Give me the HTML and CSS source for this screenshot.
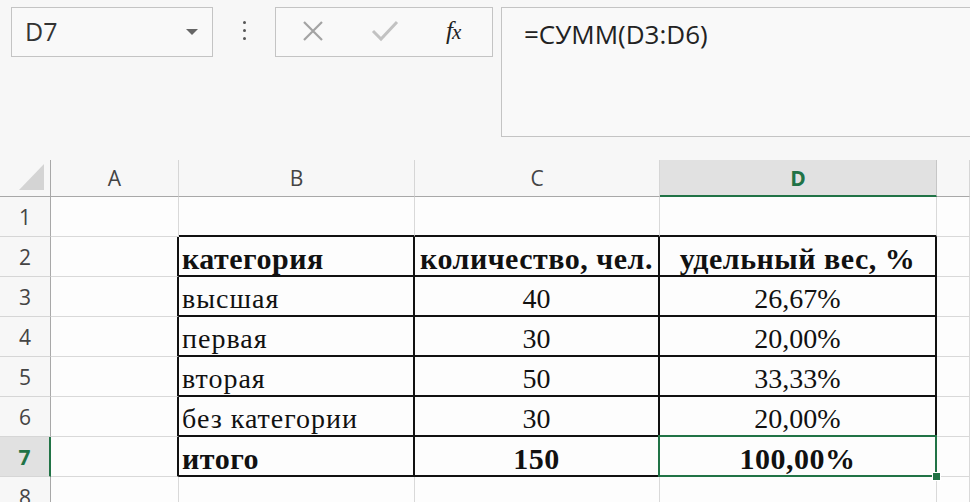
FILE: index.html
```html
<!DOCTYPE html>
<html lang="ru">

<head>
    <meta charset="UTF-8">
    <title>Excel - СУММ</title>
    <link rel="stylesheet" href="styles.css">
</head>

<body>
    <div class="bar">
        <div class="namebox">
            <span>D7</span>
            <span class="arrow"></span>
        </div>
        <div class="dots"><i></i><i></i><i></i></div>
        <div class="tools">
            <svg class="ic" width="26" height="22" viewBox="0 0 26 22">
                <path d="M4 2 L22 20 M22 2 L4 20" stroke="#a3a3a3" stroke-width="2.2" fill="none" />
            </svg>
            <svg class="ic" width="30" height="24" viewBox="0 0 30 24">
                <path d="M3 12 L11 20 L27 3" stroke="#c2c2c2" stroke-width="3" fill="none" />
            </svg>
            <span class="fx">f<span class="x">x</span></span>
        </div>
        <div class="formula">=СУММ(D3:D6)</div>
    </div>

    <div class="sheet">
        <div class="corner"><div class="tri"></div></div>
        <div class="hd">A</div>
        <div class="hd">B</div>
        <div class="hd">C</div>
        <div class="hd sel">D</div>
        <div class="hd"></div>

        <div class="rn">1</div>
        <div class="c"></div>
        <div class="c tt"></div>
        <div class="c tt"></div>
        <div class="c tt"></div>
        <div class="c"></div>

        <div class="rn">2</div>
        <div class="c tl"></div>
        <div class="c t b">категория</div>
        <div class="c t b mid">количество, чел.</div>
        <div class="c t b mid">удельный вес, %</div>
        <div class="c"></div>

        <div class="rn">3</div>
        <div class="c tl"></div>
        <div class="c t txt">высшая</div>
        <div class="c t mid">40</div>
        <div class="c t mid">26,67%</div>
        <div class="c"></div>

        <div class="rn">4</div>
        <div class="c tl"></div>
        <div class="c t txt">первая</div>
        <div class="c t mid">30</div>
        <div class="c t mid">20,00%</div>
        <div class="c"></div>

        <div class="rn">5</div>
        <div class="c tl"></div>
        <div class="c t txt">вторая</div>
        <div class="c t mid">50</div>
        <div class="c t mid">33,33%</div>
        <div class="c"></div>

        <div class="rn">6</div>
        <div class="c tl"></div>
        <div class="c t txt">без категории</div>
        <div class="c t mid">30</div>
        <div class="c t mid">20,00%</div>
        <div class="c"></div>

        <div class="rn sel">7</div>
        <div class="c tl"></div>
        <div class="c t b">итого</div>
        <div class="c t b mid">150</div>
        <div class="c t b mid active">100,00%</div>
        <div class="c"></div>

        <div class="rn">8</div>
        <div class="c"></div>
        <div class="c"></div>
        <div class="c"></div>
        <div class="c"></div>
        <div class="c"></div>
    </div>
</body>

</html>
```

FILE: styles.css
```css
body {
    margin: 0;
    width: 970px;
    height: 502px;
    overflow: hidden;
    background: #f7f7f7;
    font-family: "Open Sans", "Noto Sans", sans-serif;
}

/* formula bar */
.bar {
    display: flex;
    align-items: flex-start;
    padding: 7px 0 0 11px;
}

.namebox {
    box-sizing: border-box;
    width: 202px;
    height: 50px;
    border: 1px solid #c4c4c4;
    background: #f9f9f9;
    display: flex;
    align-items: center;
    justify-content: space-between;
    padding: 0 14px 2px 13px;
    font-size: 25px;
    color: #333;
}

.arrow {
    width: 0;
    height: 0;
    border-left: 6px solid transparent;
    border-right: 6px solid transparent;
    border-top: 6px solid #666;
    margin-top: 2px;
}

.dots {
    width: 62px;
    height: 50px;
    display: flex;
    flex-direction: column;
    align-items: center;
    justify-content: center;
    gap: 5px;
    padding-bottom: 4px;
    box-sizing: border-box;
}

.dots i {
    width: 3px;
    height: 3px;
    background: #555;
    border-radius: 50%;
}

.tools {
    box-sizing: border-box;
    width: 218px;
    height: 50px;
    border: 1px solid #c4c4c4;
    background: #f9f9f9;
    display: flex;
    align-items: center;
    padding: 0 0 2px 24px;
}

.tools .ic:first-child {
    margin-right: 44px;
}

.tools .ic:nth-child(2) {
    margin-right: 46px;
}

.fx {
    font-family: "Liberation Serif", serif;
    font-style: italic;
    font-size: 25px;
    color: #222;
    letter-spacing: -1px;
}

.fx .x {
    font-size: 21px;
}

.formula {
    box-sizing: border-box;
    flex: 1;
    height: 130px;
    margin-left: 8px;
    margin-right: -2px;
    border: 1px solid #c4c4c4;
    background: #f9f9f9;
    padding: 8px 0 0 22px;
    font-size: 26px;
    color: #222;
}

/* sheet grid */
.sheet {
    margin-top: 23px;
    display: grid;
    grid-template-columns: 51px 128px 236px 245px 277px 1fr;
    grid-template-rows: 37px repeat(8, 40px);
}

.corner {
    border-right: 1px solid #a8a8a8;
    border-bottom: 1px solid #a8a8a8;
    position: relative;
}

.tri {
    position: absolute;
    right: 6px;
    bottom: 6px;
    width: 25px;
    height: 26px;
    background: #d4d4d4;
    clip-path: polygon(100% 0, 100% 100%, 0 100%);
}

.hd {
    border-right: 1px solid #d6d6d6;
    border-bottom: 1px solid #a8a8a8;
    text-align: center;
    font-size: 21px;
    line-height: 36px;
    color: #444;
}

.hd.sel {
    background: #e1e1e1;
    color: #217346;
    font-weight: bold;
    border-right-color: #c6c6c6;
    border-bottom: 2px solid #217346;
}

.rn {
    border-right: 1px solid #a8a8a8;
    border-bottom: 1px solid #d6d6d6;
    text-align: center;
    font-size: 21px;
    line-height: 40px;
    color: #444;
}

.rn.sel {
    background: #e1e1e1;
    color: #217346;
    font-weight: bold;
    border-right: 2px solid #217346;
}

.c {
    box-sizing: border-box;
    background: #fdfdfd;
    border-right: 1px solid #d9d9d9;
    border-bottom: 1px solid #d9d9d9;
    font-family: "Liberation Serif", "Times New Roman", serif;
    font-size: 28px;
    line-height: 44px;
    padding-left: 3px;
    color: #111;
    white-space: nowrap;
}

.c.t {
    border-right: 2px solid #111;
    border-bottom: 2px solid #111;
}

.c.tl {
    border-right: 2px solid #111;
}

.c.tt {
    border-bottom: 2px solid #111;
}

.txt {
    letter-spacing: 1px;
}

.b {
    font-weight: bold;
    font-size: 30px;
    letter-spacing: 0.5px;
}

.mid {
    text-align: center;
    padding-left: 0;
}

.active {
    position: relative;
}

.active::before {
    content: "";
    position: absolute;
    left: -2px;
    top: -2px;
    right: -2px;
    bottom: -2px;
    border: 2px solid #217346;
}

.active::after {
    content: "";
    position: absolute;
    right: -6px;
    bottom: -6px;
    width: 7px;
    height: 7px;
    background: #217346;
    border: 1px solid #fff;
}
```
